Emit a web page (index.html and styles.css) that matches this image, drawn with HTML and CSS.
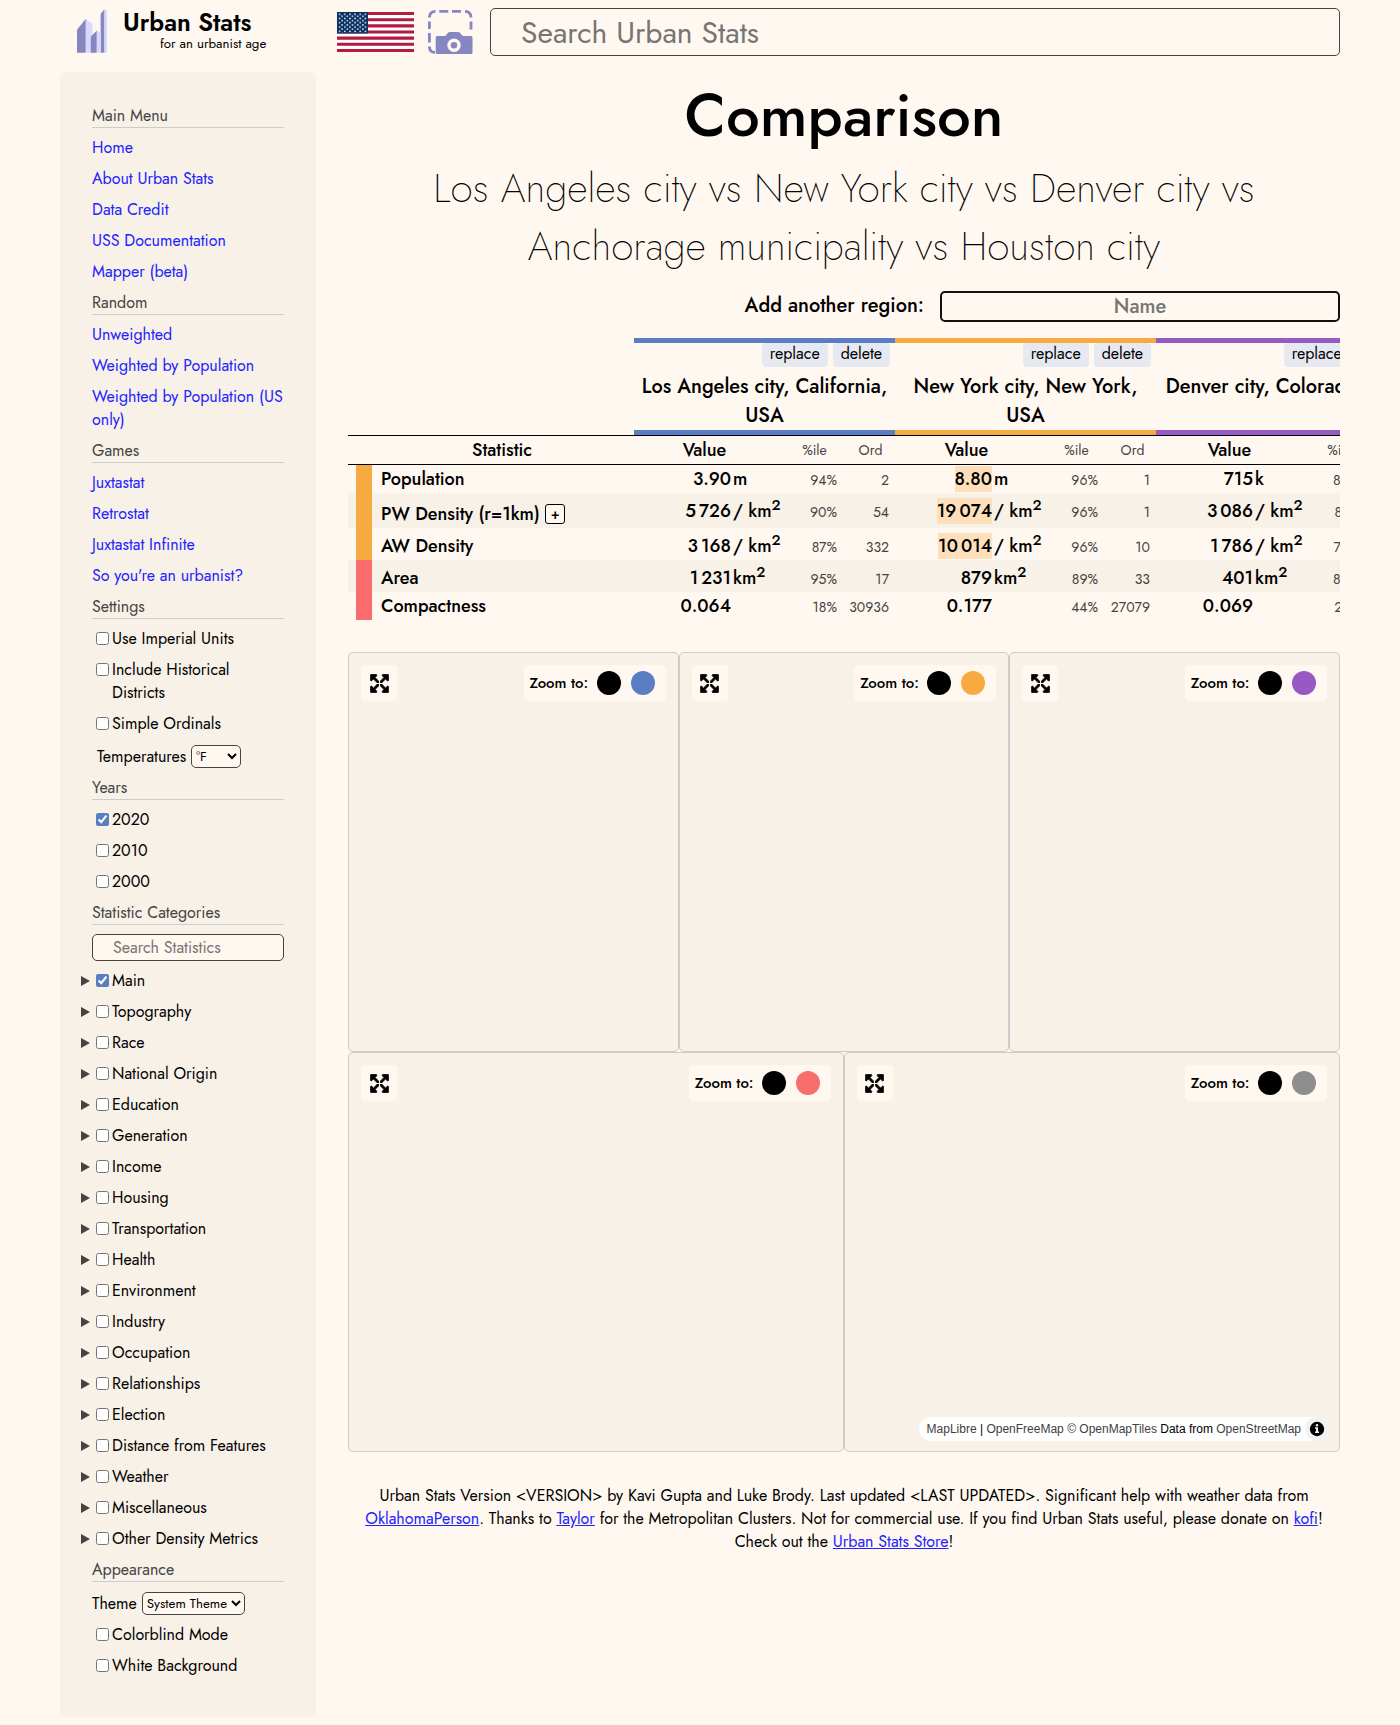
FILE: index.html
```
<!DOCTYPE html>
<html lang="en">
<head>
<meta charset="utf-8">
<title>Urban Stats</title>
<link rel="stylesheet" href="styles.css">
</head>
<body>
<svg width="0" height="0" class="defs">
  <symbol id="expand" viewBox="-8 24 464 464">
    <path stroke="#000" stroke-width="16" d="M448 344v112a23.94 23.94 0 0 1-24 24H312c-21.39 0-32.09-25.9-17-41l36.2-36.2L224 295.6 116.77 402.9 153 439c15.09 15.1 4.39 41-17 41H24a23.94 23.94 0 0 1-24-24V344c0-21.4 25.89-32.1 41-17l36.19 36.2L184.46 256 77.18 148.7 41 185c-15.1 15.1-41 4.4-41-17V56a23.94 23.94 0 0 1 24-24h112c21.39 0 32.09 25.9 17 41l-36.2 36.2L224 216.4l107.23-107.3L295 73c-15.09-15.1-4.39-41 17-41h112a23.94 23.94 0 0 1 24 24v112c0 21.4-25.89 32.1-41 17l-36.19-36.2L263.54 256l107.28 107.3L407 327.1c15.1-15.2 41-4.5 41 16.9z"/>
    <path d="M224 170V342M138 256H310" stroke="#fff8f0" stroke-width="26"/>
  </symbol>
</svg>
<div class="page">
  <header>
    <div class="logo">
      <svg class="mark" width="30" height="44" viewBox="77 9.3 30 44">
        <g fill="#8686c0"><path d="M77 30l8.8-11v34H77z"/><path d="M100.6 14.3l3.9-5V53h-3.9z"/></g>
        <g fill="#d9d9ff"><path d="M85.8 19l6.6 5v29h-6.6z"/><path d="M104.5 9.3l2.5 2V53h-2.5z"/></g>
        <path fill="#8686c0" d="M90.8 37l6-6.3V53h-6z"/><path fill="#d9d9ff" d="M96.8 30.7l3.8 2.3v20h-3.8z"/>
      </svg>
      <div class="brand"><div class="name">Urban Stats</div><div class="tag">for an urbanist age</div></div>
    </div>
    <svg class="flag" width="77" height="40" viewBox="0 0 77 40" preserveAspectRatio="none">
      <defs>
        <pattern id="stars" width="5.17" height="4.3" patternUnits="userSpaceOnUse">
          <circle cx="2.58" cy="2.15" r=".8" fill="#fff"/><circle cx="0" cy="0" r=".8" fill="#fff"/><circle cx="5.17" cy="0" r=".8" fill="#fff"/><circle cx="0" cy="4.3" r=".8" fill="#fff"/><circle cx="5.17" cy="4.3" r=".8" fill="#fff"/>
        </pattern>
      </defs>
      <path fill="#fff" d="M0 0h77v40H0z"/>
      <path stroke="#b31942" stroke-width="3.077" d="M0 1.54h77M0 7.69h77M0 13.85h77M0 20h77M0 26.15h77M0 32.31h77M0 38.46h77"/>
      <path fill="#0a3161" d="M0 0h31v21.5H0z"/>
      <path fill="url(#stars)" d="M1 1h29v19.5H1z"/>
    </svg>
    <svg class="camera" width="45" height="44" viewBox="0 0 45 44">
      <g fill="none" stroke="#8686c0" stroke-width="2.8">
        <path d="M1.4 7.5Q1.4 1.4 7.5 1.4M11.300 1.4h9M24 1.4h9M37 1.4Q43 1.4 43 7.5M1.4 11.5v7.5M1.4 23v9.5M43 11.5v8M1.4 36.5Q1.4 42.4 7 42.4"/>
      </g>
      <path fill="#8686c0" d="M7.7 27.5q0-1.5 1.5-1.5h7.3q1.5 0 2.5-2t3-2h8q2 0 3 2t2.500 2H43q1.500 0 1.500 1.500V42.500q0 1.500-1.500 1.500H9.200q-1.500 0-1.500-1.500z"/>
      <circle cx="26" cy="35.200" r="5" fill="none" stroke="#fff8f0" stroke-width="3.400"/>
    </svg>
    <input class="search" placeholder="Search Urban Stats">
  </header>
  <div class="body">
    <nav>
      <h3>Main Menu</h3>
      <a>Home</a><a>About Urban Stats</a><a>Data Credit</a><a>USS Documentation</a><a>Mapper (beta)</a>
      <h3>Random</h3>
      <a>Unweighted</a><a>Weighted by Population</a><a>Weighted by Population (US only)</a>
      <h3>Games</h3>
      <a>Juxtastat</a><a>Retrostat</a><a>Juxtastat Infinite</a><a>So you're an urbanist?</a>
      <h3>Settings</h3>
      <label><input type="checkbox"><span>Use Imperial Units</span></label>
      <label><input type="checkbox"><span>Include Historical Districts</span></label>
      <label><input type="checkbox"><span>Simple Ordinals</span></label>
      <div class="pick temp"><span>Temperatures</span><select class="deg"><option>°F</option></select></div>
      <h3>Years</h3>
      <label><input type="checkbox" checked><span>2020</span></label>
      <label><input type="checkbox"><span>2010</span></label>
      <label><input type="checkbox"><span>2000</span></label>
      <h3>Statistic Categories</h3>
      <input class="filter" placeholder="Search Statistics">
      <label class="cat"><input type="checkbox" checked><span>Main</span></label>
      <label class="cat"><input type="checkbox"><span>Topography</span></label>
      <label class="cat"><input type="checkbox"><span>Race</span></label>
      <label class="cat"><input type="checkbox"><span>National Origin</span></label>
      <label class="cat"><input type="checkbox"><span>Education</span></label>
      <label class="cat"><input type="checkbox"><span>Generation</span></label>
      <label class="cat"><input type="checkbox"><span>Income</span></label>
      <label class="cat"><input type="checkbox"><span>Housing</span></label>
      <label class="cat"><input type="checkbox"><span>Transportation</span></label>
      <label class="cat"><input type="checkbox"><span>Health</span></label>
      <label class="cat"><input type="checkbox"><span>Environment</span></label>
      <label class="cat"><input type="checkbox"><span>Industry</span></label>
      <label class="cat"><input type="checkbox"><span>Occupation</span></label>
      <label class="cat"><input type="checkbox"><span>Relationships</span></label>
      <label class="cat"><input type="checkbox"><span>Election</span></label>
      <label class="cat"><input type="checkbox"><span>Distance from Features</span></label>
      <label class="cat"><input type="checkbox"><span>Weather</span></label>
      <label class="cat"><input type="checkbox"><span>Miscellaneous</span></label>
      <label class="cat"><input type="checkbox"><span>Other Density Metrics</span></label>
      <h3>Appearance</h3>
      <div class="pick"><span>Theme</span><select class="theme"><option>System Theme</option></select></div>
      <label><input type="checkbox"><span>Colorblind Mode</span></label>
      <label><input type="checkbox"><span>White Background</span></label>
    </nav>
    <main>
      <h1>Comparison</h1>
      <h2>Los Angeles city vs New York city vs Denver city vs Anchorage municipality vs Houston city</h2>
      <div class="add"><span>Add another region:</span><input placeholder="Name"></div>

      <div class="table">
        <div class="regions">
          <div class="region blue"><div class="acts"><button>replace</button><button>delete</button></div><div class="title">Los Angeles city, California, USA</div></div>
          <div class="region orange"><div class="acts"><button>replace</button><button>delete</button></div><div class="title">New York city, New York, USA</div></div>
          <div class="region purple"><div class="acts"><button>replace</button><button>delete</button></div><div class="title">Denver city, Colorado, USA</div></div>
        </div>
        <div class="row head">
          <div class="label">Statistic</div>
          <div class="cell c1"><b>Value</b><i>%ile</i><i>Ord</i></div>
          <div class="cell c2"><b>Value</b><i>%ile</i><i>Ord</i></div>
          <div class="cell c3"><b>Value</b><i>%ile</i><i>Ord</i></div>
        </div>
        <div class="row">
          <div class="bar density"></div><div class="label">Population</div>
          <div class="cell"><b>3.90</b><u>m</u><i>94%</i><i>2</i></div>
          <div class="cell"><b><mark>8.80</mark></b><u>m</u><i>96%</i><i>1</i></div>
          <div class="cell"><b>715</b><u>k</u><i>85%</i><i>94</i></div>
        </div>
        <div class="row tall">
          <div class="bar density"></div><div class="label">PW Density (r=1km) <button class="plus">+</button></div>
          <div class="cell"><b>5<s></s>726</b><u>/ km<sup>2</sup></u><i>90%</i><i>54</i></div>
          <div class="cell"><b><mark>19<s></s>074</mark></b><u>/ km<sup>2</sup></u><i>96%</i><i>1</i></div>
          <div class="cell"><b>3<s></s>086</b><u>/ km<sup>2</sup></u><i>81%</i><i>94</i></div>
        </div>
        <div class="row mid">
          <div class="bar density"></div><div class="label">AW Density</div>
          <div class="cell"><b>3<s></s>168</b><u>/ km<sup>2</sup></u><i>87%</i><i>332</i></div>
          <div class="cell"><b><mark>10<s></s>014</mark></b><u>/ km<sup>2</sup></u><i>96%</i><i>10</i></div>
          <div class="cell"><b>1<s></s>786</b><u>/ km<sup>2</sup></u><i>78%</i><i>94</i></div>
        </div>
        <div class="row mid">
          <div class="bar shape"></div><div class="label">Area</div>
          <div class="cell"><b>1<s></s>231</b><u>km<sup>2</sup></u><i>95%</i><i>17</i></div>
          <div class="cell"><b>879</b><u>km<sup>2</sup></u><i>89%</i><i>33</i></div>
          <div class="cell"><b>401</b><u>km<sup>2</sup></u><i>85%</i><i>94</i></div>
        </div>
        <div class="row">
          <div class="bar shape"></div><div class="label">Compactness</div>
          <div class="cell"><b>0.064</b><u></u><i>18%</i><i>30936</i></div>
          <div class="cell"><b>0.177</b><u></u><i>44%</i><i>27079</i></div>
          <div class="cell"><b>0.069</b><u></u><i>21%</i><i>30412</i></div>
        </div>
      </div>

      <div class="maps">
        <div class="map"><button class="full"><svg width="19" height="19"><use href="#expand"/></svg></button><div class="zoom">Zoom to:<span class="dot"></span><span class="dot blue"></span></div></div>
        <div class="map"><button class="full"><svg width="19" height="19"><use href="#expand"/></svg></button><div class="zoom">Zoom to:<span class="dot"></span><span class="dot orange"></span></div></div>
        <div class="map"><button class="full"><svg width="19" height="19"><use href="#expand"/></svg></button><div class="zoom">Zoom to:<span class="dot"></span><span class="dot purple"></span></div></div>
        <div class="map wide"><button class="full"><svg width="19" height="19"><use href="#expand"/></svg></button><div class="zoom">Zoom to:<span class="dot"></span><span class="dot red"></span></div></div>
        <div class="map wide"><button class="full"><svg width="19" height="19"><use href="#expand"/></svg></button><div class="zoom">Zoom to:<span class="dot"></span><span class="dot grey"></span></div>
          <div class="credit"><div><a>MapLibre</a> | <a>OpenFreeMap</a> <a>© OpenMapTiles</a> Data from <a>OpenStreetMap</a></div>
            <svg width="24" height="24" viewBox="0 0 24 24"><circle cx="12" cy="12" r="12" fill="#f2f2f2"/><circle cx="12" cy="12" r="7.200" fill="#000"/><circle cx="12" cy="8.200" r="1.200" fill="#f2f2f2"/><path fill="#f2f2f2" d="M10 10.200h3v4.300h1v1.500h-4v-1.500h1v-2.800h-1z"/></svg></div>
        </div>
      </div>

      <footer>Urban Stats Version &lt;VERSION&gt; by Kavi Gupta and Luke Brody. Last updated &lt;LAST UPDATED&gt;. Significant help with weather data from <a>OklahomaPerson</a>. Thanks to <a>Taylor</a> for the Metropolitan Clusters. Not for commercial use. If you find Urban Stats useful, please donate on <a>kofi</a>! Check out the <a>Urban Stats Store</a>!</footer>
    </main>
  </div>
</div>
</body>
</html>
```
FILE: styles.css
```
* { box-sizing: border-box; }
body { margin: 0; background: #fff8f0; color: #000; font: 16px/23px Jost, Lato, sans-serif; }
.defs { position: absolute; }
input, button, select { font-family: inherit; margin: 0; color: #000; }
button { border: 0; padding: 0; }
::placeholder { color: #757575; opacity: 1; }
.page { padding: 8px 60px; }

header { display: flex; height: 48px; align-items: center; }
.logo { width: 277px; height: 48px; padding: 1px 0 0 17px; display: flex; align-items: flex-start; }
.brand { padding: 1px 0 0 16px; display: flex; flex-direction: column; }
.name { font-size: 24.700px; font-weight: 600; line-height: 26px; white-space: nowrap; }
.tag { font-size: 13.300px; line-height: 15px; padding-left: 37px; white-space: nowrap; }
.camera { margin-left: 14px; }
.search { margin-left: 17px; flex: 1; height: 48px; border: 1px solid #444; border-radius: 5px; background: #fff8f0; font-size: 30px; padding: 0 30px; }

.body { display: flex; gap: 32px; margin-top: 16px; align-items: flex-start; }
nav { width: 256px; height: 1645px; background: #f7f1e8; border-radius: 5px; padding: 32px; display: flex; flex-direction: column; gap: 8px; }
h3 { margin: 0; font-size: 16px; font-weight: 400; color: #444; height: 24px; border-bottom: 1px solid #ccc; flex: none; }
nav a { color: #2222ff; }
label { display: flex; align-items: flex-start; padding-left: 4px; }
label input { width: 13px; height: 13px; margin: 5px 3px 0 0; flex: none; accent-color: #5a7dc3; }
.cat::before { content: ""; width: 9px; height: 10px; margin: 7px 6px 0 -15px; background: #444; clip-path: polygon(0 0, 100% 50%, 0 100%); flex: none; }
.pick { display: flex; align-items: center; gap: 5px; height: 25px; }
.pick span { padding-top: 1px; }
.temp { padding-left: 5px; }
select { height: 23px; margin-top: 2px; border: 1px solid #444; border-radius: 5px; background: #fff8f0; font-size: 13.333px; padding: 0; }
.deg { width: 50px; }
.theme { width: 103px; }
.filter { height: 27px; margin-top: 1px; border: 1px solid #444; border-radius: 5px; background: #fff8f0; font-size: 16px; padding: 0 20px; width: 192px; }

main { width: 992px; }
h1 { margin: 0; font-size: 60px; font-weight: 500; line-height: 87px; text-align: center; }
h2 { margin: 0; font-size: 40px; font-weight: 200; line-height: 58px; text-align: center; }
.add { margin-top: 16px; display: flex; justify-content: flex-end; align-items: center; gap: 16px; height: 31px; font-size: 20px; font-weight: 500; }
.add span { line-height: 29px; padding-bottom: 2px; }
.add input { width: 400px; height: 31px; border: 2px solid #111; border-radius: 5px; background: #fff8f0; text-align: center; font-size: 20px; font-weight: 500; padding: 0; }

.table { margin-top: 16px; overflow: hidden; font-size: 18px; font-weight: 500; }
.regions { display: flex; padding-left: 286px; height: 97px; width: 1069px; }
.region { width: 261px; border: solid; border-width: 5px 0; }
.region.blue { border-color: #5a7dc3; background: none; }
.region.orange { border-color: #f7aa41; background: none; }
.region.purple { border-color: #975ac2; background: none; }
.acts { display: flex; justify-content: flex-end; gap: 5px; padding-right: 5px; }
.acts button { height: 24px; padding: 0 8px 2px; border-radius: 4px; background: #e6e9f0; font-size: 16px; line-height: 22px; }
.title { margin-top: 5px; font-size: 20px; line-height: 29px; text-align: center; padding: 0 5px; }
.row { display: flex; align-items: baseline; width: 1069px; height: 28px; line-height: 26px; padding: 1px 0 0 8px; }
.row:nth-child(2n+4) { background: #f7f1e8; }
.row.tall { height: 35px; padding-top: 0; }
.row.mid { height: 32px; padding-top: 5px; }
.row.head { height: 30px; border: solid #000; border-width: 1px 0; background: none; }
.head .label { text-align: center; width: 278px; padding-left: 14px; }
.bar { width: 16px; align-self: stretch; margin-top: -1px; }
.mid .bar { margin-top: -5px; }
.tall .bar { margin-top: 0; }
.density { background: #f7aa41; }
.shape { background: #f96d6d; }
.label { width: 262px; padding-left: 9px; }
.plus { width: 20px; height: 20px; border: 1px solid #000; border-radius: 3px; background: #fff8f0; font-size: 14px; font-weight: 500; line-height: 16px; position: relative; top: -1px; }
.cell { width: 261px; display: grid; grid-template-columns: 97px 51px 55px 52px; align-items: baseline; }
.tall { align-items: flex-start; }
.tall .cell { padding-top: 5px; }
.tall .label { padding-top: 8px; }
.cell b { font-weight: 500; text-align: right; white-space: nowrap; }
.cell u { text-decoration: none; padding-left: 2px; white-space: nowrap; }
.cell i { font-style: normal; font-size: 14px; font-weight: 400; color: #444; text-align: right; }
.cell s { display: inline-block; width: 3px; text-decoration: none; }
.cell sup { line-height: 0; font-size: 15px; }
mark { display: inline-block; background: #fde0bb; color: #000; height: 26px; }
.head .cell { grid-template-columns: 141px 79px 33px; }
.head .cell b, .head .cell i { text-align: center; }
.head .cell i { position: relative; top: -1px; }
.head .c2 { padding-left: 1px; }
.head .c3 { padding-left: 3px; }

.maps { margin-top: 32px; display: grid; grid-template-columns: repeat(6, 1fr); }
.map { grid-column: span 2; height: 400px; border: 1px solid #ccc; border-radius: 5px; background: #f7f1e8; padding: 12px; display: flex; justify-content: space-between; align-items: flex-start; position: relative; }
.wide { grid-column: span 3; }
.full { width: 36px; height: 36px; border-radius: 4px; background: #fff8f0; display: flex; align-items: center; justify-content: center; }
.zoom { height: 36px; width: 142px; border-radius: 5px; background: #fff8f0; display: flex; align-items: center; justify-content: flex-end; padding-right: 11px; font-size: 15px; font-weight: 500; white-space: nowrap; }
.dot { width: 24px; height: 24px; margin-left: 8.500px; border-radius: 50%; background: #000; flex: none; }
.dot + .dot { margin-left: 10px; }
.dot.blue { background: #5a7dc3; }
.dot.orange { background: #f7aa41; }
.dot.purple { background: #975ac2; }
.dot.red { background: #f96d6d; }
.dot.grey { background: #8e8e8e; }
.credit { position: absolute; right: 10px; bottom: 10px; height: 24px; border-radius: 12px; background: #fff; display: flex; align-items: center; gap: 4px; padding-left: 8px; font: 12px/20px "Liberation Sans", Arial, sans-serif; white-space: nowrap; }
.credit a { color: #404040; }

footer { margin-top: 32px; text-align: center; padding: 0 8px; }
footer a { color: #2222ff; text-decoration: underline; }
```
